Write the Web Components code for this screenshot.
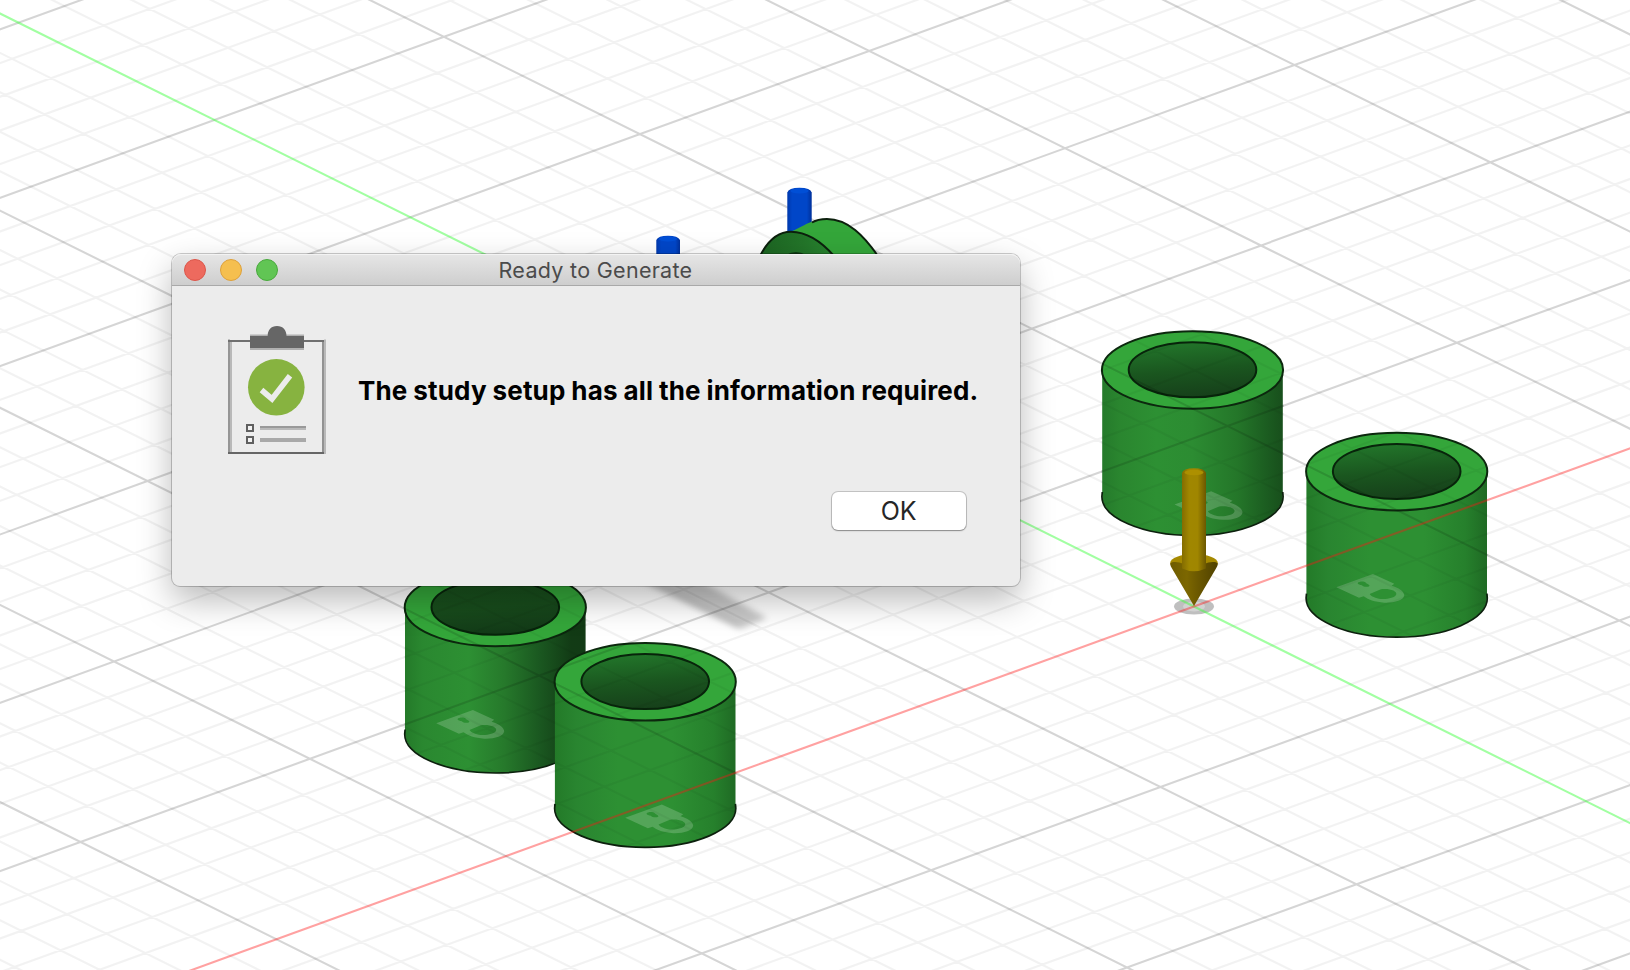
<!DOCTYPE html>
<html lang="en">
<head>
<meta charset="utf-8">
<title>Ready to Generate</title>
<style>
html,body{margin:0;height:100%;overflow:hidden;background:#fff}
body{font-family:Inter,"Liberation Sans",sans-serif}
</style>
</head>
<body>
<model-viewport>
  <mac-dialog>
    <span slot="title">Ready to Generate</span>
    <clipboard-icon slot="icon"></clipboard-icon>
    <span slot="message">The study setup has all the information required.</span>
    <mac-button slot="actions">OK</mac-button>
  </mac-dialog>
</model-viewport>
<script>
const shadow = (el, html) => { el.attachShadow({mode:'open'}).innerHTML = html; };

/* Isometric ground grid: origin and the two projected axis steps. */
const O = [1194, 606.5], U = [195.9, 97.3], V = [229.4, -83.2];
const seg = (a, d) => `M${(a[0]-9*d[0]).toFixed(2)} ${(a[1]-9*d[1]).toFixed(2)}L${(a[0]+9*d[0]).toFixed(2)} ${(a[1]+9*d[1]).toFixed(2)}`;
function gridLines() {
  let minor = '', major = '';
  for (let i = -45; i <= 45; i++) {
    if (i === 0) continue;
    const k = i / 5;
    const s = seg([O[0]+k*V[0], O[1]+k*V[1]], U) + seg([O[0]+k*U[0], O[1]+k*U[1]], V);
    if (i % 5) minor += s; else major += s;
  }
  return `<g id="grid" fill="none"><path d="${minor}" stroke="#000" stroke-opacity=".052" stroke-width="2.2"/>
    <path d="${major}" stroke="#000" stroke-opacity=".165" stroke-width="2.1"/></g>`;
}
const axis = (d, c) => `<path d="${seg(O, d)}" stroke="${c}" stroke-width="2.1"/>`;
/* Hollow cylinders, each with its top rim centred on (x, y). */
const TUBES = [[1192.5, 370, 'sA', 'bA'], [1396.7, 471.6, 'sB', 'bA'], [495.3, 607.5, 'sC', 'bC'], [645.2, 681.8, 'sB', 'bA']];
const tube = ([x, y, side, bore]) => `<g transform="translate(${x} ${y})">
  <path d="M-90.3 0V126.5A90.3 39 0 0 0 90.3 126.5V0Z" fill="url(#${side})"/>
  <path d="M-90.2 122L-90.6 126.5A90.6 39 0 0 0 90.6 126.5L90.2 122" fill="none" stroke="#0c200d" stroke-width="1.7"/>
  <ellipse rx="90.6" ry="38.8" fill="#34a63a" stroke="#0c280e" stroke-width="2"/>
  <ellipse cx="0" cy="-.2" rx="63.8" ry="27.5" fill="url(#${bore})" stroke="#08240b" stroke-width="2"/></g>`;
const tubeClip = ([x, y]) => `<path transform="translate(${x} ${y})" d="M-91.5 0A91.5 39.8 0 0 1 91.5 0V126.5A91.5 39.8 0 0 1 -91.5 126.5Z"/>`;
const lock = (x, y) => `<path transform="translate(${x} ${y}) scale(.3333) translate(-18 -67)" fill="#fff" fill-opacity=".19" fill-rule="evenodd"
  d="M18 67L128 27L192 56L184 62C204 67 222 79 222 91C220 107 192 114 162 113C134 112 112 103 100 94L86 98ZM118 87L152 73C180 70 200 79 198 88C194 99 172 103 152 102C136 100 122 94 118 87ZM82 54C86 48 102 48 107 53C108 56 116 58 118 62C114 67 100 67 95 61C90 60 82 58 82 54Z"/>`;
const grad = (id, stops, dir='') => `<linearGradient id="${id}" ${dir}>${stops.map(([o,c])=>`<stop offset="${o}" stop-color="${c}"/>`).join('')}</linearGradient>`;
const down = 'x1="0.4" y1="0" x2="0.6" y2="1"';

customElements.define('model-viewport', class extends HTMLElement {
  constructor() {
    super();
    shadow(this, `<style>
      :host{display:block;position:relative;width:1630px;height:970px;overflow:hidden;background:#fff}
      svg{display:block}
      ::slotted(mac-dialog){position:absolute;left:172px;top:254px}
    </style>
    <svg width="1630" height="970" viewBox="0 0 1630 970">
      <defs>
        ${grad('sA',[[0,'#257a2b'],[.1,'#2a862f'],[.3,'#2d9033'],[.5,'#2c8c32'],[.75,'#247629'],[.92,'#1b5b20'],[1,'#184f1c']])}
        ${grad('sB',[[0,'#237a28'],[.12,'#298530'],[.35,'#2d9033'],[.65,'#2d9033'],[.88,'#26802c'],[1,'#1f6a24']])}
        ${grad('sC',[[0,'#247a29'],[.1,'#2a8830'],[.35,'#2d9033'],[.55,'#26792b'],[.75,'#1a5720'],[.92,'#123b15'],[1,'#123a15']])}
        ${grad('bA',[[0,'#22752a'],[.5,'#1a561f'],[1,'#163f1a']],down)}
        ${grad('bC',[[0,'#19521d'],[.5,'#184c1c'],[1,'#123817']],down)}
        ${grad('blue',[[0,'#0038ac'],[.2,'#0046c8'],[.8,'#0046c8'],[1,'#00309a']])}
        ${grad('gold',[[0,'#846c00'],[.3,'#a08700'],[.65,'#a08600'],[1,'#6b5700']])}
        ${grad('cone',[[0,'#6e5b00'],[.35,'#7c6700'],[.6,'#6a5700'],[1,'#4f4100']])}
        ${grad('face',[[0,'#1c6422'],[.6,'#237529'],[1,'#288530']])}
        <filter id="soft" x="-20%" y="-20%" width="140%" height="140%"><feGaussianBlur stdDeviation="3"/></filter>
        <clipPath id="solids">${TUBES.map(tubeClip).join('')}</clipPath>
      </defs>
      <g filter="url(#soft)"><path d="M624 572L672 565L767 618L740 629Z" fill="#c8c8c8"/><path d="M636 576L738 626" stroke="#b4b4b4" stroke-width="4"/></g>
      ${gridLines()}
      <ellipse cx="1194" cy="606.5" rx="20" ry="8" fill="#000" fill-opacity=".25"/>
      <ellipse cx="1194" cy="606.5" rx="11" ry="5" fill="#fff" fill-opacity=".3"/>
      ${TUBES.map(tube).join('')}
      ${lock(1174.5, 504.5)}${lock(1336.3, 587.3)}${lock(436.2, 723.3)}${lock(625.2, 817.8)}
      <g clip-path="url(#solids)"><use href="#grid" opacity=".8"/></g>
      ${axis(U, 'rgba(60,255,60,.48)')}${axis(V, 'rgba(255,20,20,.4)')}
      <path d="M656.3 270V240Q658 235.7 668 235.7T680 240V270Z" fill="url(#blue)"/>
      <path d="M787.3 240V192.500Q788.500 187.800 799.500 187.800T811.700 192.500V240Z" fill="url(#blue)"/>
      <ellipse cx="799.500" cy="191" rx="9" ry="2.500" fill="#004fd6"/>
      <ellipse cx="668" cy="239" rx="9" ry="2.500" fill="#004fd6"/>
      <path d="M788 232C800 230 806 220 827 219C848 219 864 236 878 256H810Z" fill="#34a63a"/>
      <path d="M812 222.500C816 220 821 219 827 219C848 219 864 236 878 256" fill="none" stroke="#0c200d" stroke-width="2"/>
      <path d="M760 256C768 240 778 231.700 791 231.700C807 232 821 241 834 256Z" fill="url(#face)" stroke="#0c200d" stroke-width="2"/>
      <path d="M786 255Q796 249 806 255Z" fill="#0f3a13"/>
      <path d="M1182 473Q1183 468.300 1194 468.300T1206 473V560H1182Z" fill="url(#gold)"/>
      <ellipse cx="1194" cy="472.500" rx="9.500" ry="2.800" fill="#ad9000"/>
      <ellipse cx="1194" cy="563" rx="23.800" ry="9" fill="#a58900"/>
      <path d="M1170.200 563.500C1173 561 1179 562 1184 564H1204C1209 562 1215 561 1217.800 563.500Q1217.800 566 1216 568.500L1194 606L1172 568.500Q1170.200 566 1170.200 563.500Z" fill="url(#cone)"/>
      <path d="M1182 545H1206V568.500Q1194 574 1182 568.500Z" fill="url(#gold)"/>
    </svg><slot></slot>`);
  }
});

customElements.define('traffic-lights', class extends HTMLElement {
  constructor() {
    super();
    shadow(this, `<style>
      :host{display:flex;gap:14px;align-items:center}
      i{box-sizing:border-box;width:22px;height:22px;border-radius:50%;border:1px solid}
      .c{background:#ed6a5e;border-color:#dc5549}.m{background:#f5bf4f;border-color:#dea13b}.z{background:#61c554;border-color:#48a93c}
    </style><i class="c"></i><i class="m"></i><i class="z"></i>`);
  }
});

customElements.define('clipboard-icon', class extends HTMLElement {
  constructor() {
    super();
    shadow(this, `<style>:host{display:block;width:120px;height:140px}svg{display:block}</style>
    <svg width="120" height="140" viewBox="0 0 120 140">
      <path d="M9 19.500V134" stroke="#959595" stroke-width="2"/><path d="M11 22V132" stroke="#b9b9b9" stroke-width="2"/>
      <path d="M103 22V132" stroke="#929292" stroke-width="2"/><path d="M105 19.500V134" stroke="#b9b9b9" stroke-width="2"/>
      <path d="M8 21H104" stroke="#707070" stroke-width="2"/><path d="M8 133H104" stroke="#666" stroke-width="2"/>
      <path d="M30 14.500H84V30H30Z" fill="#b0b0b0"/>
      <path d="M30 16H47.700C47.700 10 51 6 57 6S66.500 10 66.500 16H84V28H30Z" fill="#666"/>
      <circle cx="56.300" cy="67.300" r="28.300" fill="#87b340"/>
      <path d="M41.500 70L52 79L70 55.800" fill="none" stroke="#ececec" stroke-width="5.600"/>
      <path d="M27 105H33V111H27ZM27 117H33V123H27Z" fill="#f1f1f1" stroke="#5f5f5f" stroke-width="2"/>
      <path d="M40 107H86" stroke="#999" stroke-width="2"/><path d="M40 109H86" stroke="#b9b9b9" stroke-width="2"/>
      <path d="M40 120H86" stroke="#a9a9a9" stroke-width="4"/>
    </svg>`);
  }
});

customElements.define('mac-button', class extends HTMLElement {
  constructor() {
    super();
    shadow(this, `<style>
      :host{display:block}
      button{all:unset;box-sizing:border-box;display:flex;align-items:center;justify-content:center;width:134px;height:38px;padding-right:1px;background:#fff;border-radius:6px;
        box-shadow:0 0 0 1px rgba(0,0,0,.17),0 1px 1.500px rgba(0,0,0,.3);color:#262626;font:25px/38px Inter,"Liberation Sans",sans-serif;letter-spacing:-.3px}
    </style><button><slot></slot></button>`);
  }
});

customElements.define('mac-dialog', class extends HTMLElement {
  constructor() {
    super();
    shadow(this, `<style>
      :host{display:flex;flex-direction:column;box-sizing:border-box;width:848px;height:332px;border-radius:9px 9px 8px 8px;background:#ececec;
        box-shadow:0 0 0 1px rgba(0,0,0,.2),0 14px 34px rgba(0,0,0,.28)}
      header{display:grid;grid-template-columns:120px 1fr 120px;align-items:center;box-sizing:border-box;height:32px;padding-left:12px;
        padding-right:13px;border-radius:9px 9px 0 0;border-bottom:1.500px solid #a9a9a9;background:linear-gradient(#e6e6e6,#cecece);box-shadow:inset 0 1px #f3f3f3}
      .t{text-align:center;font-size:21.500px;line-height:30px;color:#4b4b4b;letter-spacing:.3px;white-space:nowrap}
      .b{display:flex;align-items:center;padding:34px 0 0 48px}
      .m{margin-left:18px;padding-top:1px;font-size:26px;line-height:36px;font-weight:700;color:#000;letter-spacing:.16px;word-spacing:-.5px;white-space:nowrap}
      footer{display:flex;justify-content:flex-end;padding:32px 54px 0 0}
    </style>
    <header><traffic-lights></traffic-lights><div class="t"><slot name="title"></slot></div></header>
    <div class="b"><slot name="icon"></slot><div class="m"><slot name="message"></slot></div></div>
    <footer><slot name="actions"></slot></footer>`);
  }
});
</script>
</body>
</html>
